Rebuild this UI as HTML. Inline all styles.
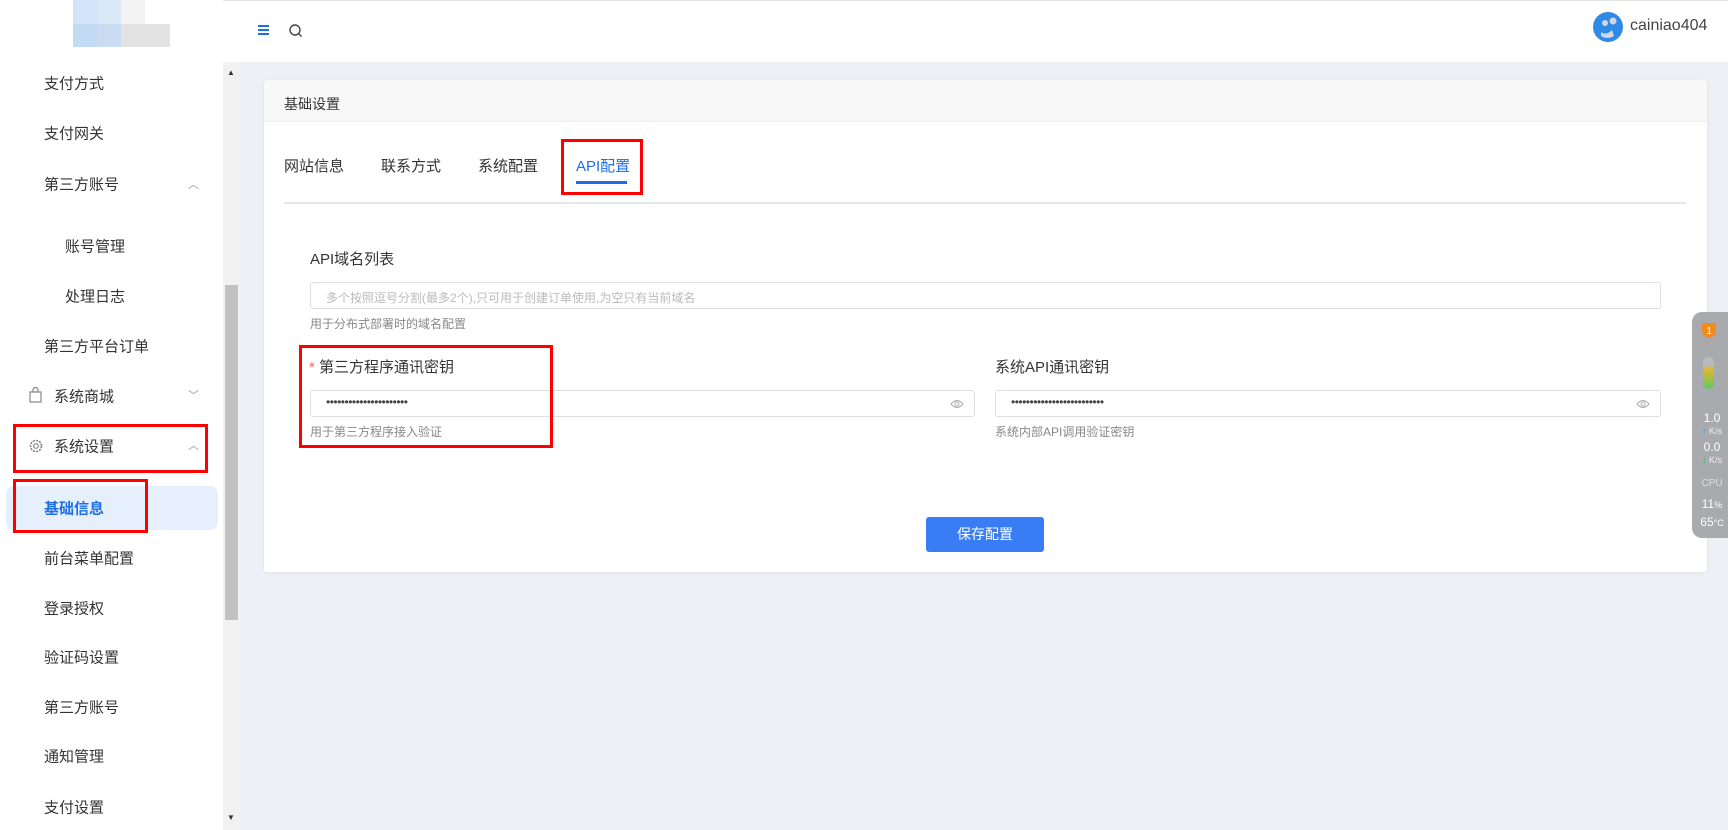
<!DOCTYPE html><html><head><meta charset="utf-8"><style>
*{margin:0;padding:0;box-sizing:border-box}
body{width:1728px;height:830px;overflow:hidden;background:#eef0f6;font-family:"Liberation Sans","Noto Sans CJK SC",sans-serif;position:relative;color:#333}
.a{position:absolute}
.side{left:0;top:0;width:223px;height:830px;background:#fff}
.mi{position:absolute;left:44px;font-size:15px;color:#333;transform:translateY(-50%)}
.sub{left:65px}
.track{left:223px;top:62px;width:17px;height:768px;background:#f1f1f1}
.thumb{left:225px;top:285px;width:13px;height:335px;background:#c1c1c1}
.hdr{left:0;top:0;width:1728px;height:62px;background:#fff;border-top:1px solid #e4e4e4}
.card{left:264px;top:80px;width:1443px;height:492px;background:#fff;border-radius:3px;box-shadow:0 1px 4px rgba(0,0,0,.06)}
.ch{left:264px;top:80px;width:1443px;height:42px;background:#f8f8f9;border-bottom:1px solid #eee;border-radius:3px 3px 0 0}
.t{font-size:15px;color:#333}
.inp{position:absolute;height:27px;border:1px solid #dcdfe6;border-radius:3px;background:#fff}
.help{font-size:12px;color:#888}
.red{position:absolute;border:3px solid #f00}
.dots{position:absolute;left:15px;top:4px;font-size:12px;letter-spacing:-0.5px;color:#444}
</style></head><body>
<div class="a hdr"></div>
<div class="a side"></div>
<div class="a" style="left:73px;top:0;width:24px;height:24px;background:#d3e4f8"></div>
<div class="a" style="left:97px;top:0;width:24px;height:24px;background:#dbe8f6"></div>
<div class="a" style="left:121px;top:0;width:24px;height:24px;background:#f3f3f3"></div>
<div class="a" style="left:73px;top:24px;width:24px;height:23px;background:#c3daf5"></div>
<div class="a" style="left:97px;top:24px;width:24px;height:23px;background:#c9dcf2"></div>
<div class="a" style="left:121px;top:24px;width:49px;height:23px;background:#e3e3e3"></div>
<div class="a" style="left:258px;top:25px;width:11px;height:2px;background:#1e6ee8;box-shadow:0 4px 0 #1e6ee8,0 8px 0 #1e6ee8"></div>
<svg class="a" style="left:289px;top:24px" width="14" height="14"><circle cx="6" cy="6" r="5" fill="none" stroke="#444" stroke-width="1.4"/><path d="M9.5 9.5L12.5 12.5" stroke="#444" stroke-width="1.4"/></svg>
<svg class="a" style="left:1593px;top:12px" width="30" height="30"><circle cx="15" cy="15" r="15" fill="#2f8ae5"/><circle cx="12" cy="11" r="3" fill="#cfd6e6"/><circle cx="20" cy="9" r="3.5" fill="#cfd6e6"/><path d="M8 20q5 4 11-2l2 6q-7 4-13 0z" fill="#cfd6e6"/></svg>
<div class="a" style="left:1630px;top:17px;font-size:16px;color:#444">cainiao404</div>

<div class="mi" style="top:83px">支付方式</div>
<div class="mi" style="top:133px">支付网关</div>
<div class="mi" style="top:184px">第三方账号</div>
<div class="a" style="left:188px;top:176px;font-size:11px;color:#999">︿</div>
<div class="mi sub" style="top:246px">账号管理</div>
<div class="mi sub" style="top:296px">处理日志</div>
<div class="mi" style="top:346px">第三方平台订单</div>
<svg class="a" style="left:28px;top:387px" width="15" height="16"><path d="M2 5h11v10H2z M5 5V3a2.5 2.5 0 0 1 5 0v2" fill="none" stroke="#888" stroke-width="1.2"/></svg>
<div class="mi" style="left:54px;top:396px">系统商城</div>
<div class="a" style="left:188px;top:387px;font-size:11px;color:#999">﹀</div>
<svg class="a" style="left:28px;top:438px" width="16" height="16"><circle cx="8" cy="8" r="5.5" fill="none" stroke="#888" stroke-width="1.6" stroke-dasharray="2.2 1"/><circle cx="8" cy="8" r="2.3" fill="none" stroke="#888" stroke-width="1.2"/></svg>
<div class="mi" style="left:54px;top:446px">系统设置</div>
<div class="a" style="left:188px;top:437px;font-size:11px;color:#999">︿</div>
<div class="a" style="left:6px;top:486px;width:212px;height:44px;background:#e6f0fd;border-radius:8px"></div>
<div class="mi" style="top:508px;color:#1e6ee8;font-weight:bold">基础信息</div>
<div class="mi" style="top:558px">前台菜单配置</div>
<div class="mi" style="top:608px">登录授权</div>
<div class="mi" style="top:657px">验证码设置</div>
<div class="mi" style="top:707px">第三方账号</div>
<div class="mi" style="top:756px">通知管理</div>
<div class="mi" style="top:807px">支付设置</div>
<div class="red" style="left:13px;top:424px;width:195px;height:49px"></div>
<div class="red" style="left:13px;top:479px;width:135px;height:54px"></div>
<div class="a track"></div><div class="a thumb"></div>
<div class="a" style="left:227px;top:68px;font-size:8px;color:#333">▲</div>
<div class="a" style="left:227px;top:813px;font-size:8px;color:#333">▼</div>

<div class="a card"></div><div class="a ch"></div>
<div class="a t" style="left:284px;top:94px;font-size:14px">基础设置</div>
<div class="a t" style="left:284px;top:155px">网站信息</div>
<div class="a t" style="left:381px;top:155px">联系方式</div>
<div class="a t" style="left:478px;top:155px">系统配置</div>
<div class="a t" style="left:576px;top:155px;color:#1e6ee8">API配置</div>
<div class="a" style="left:576px;top:181px;width:51px;height:3px;background:#1e6ee8"></div>
<div class="a" style="left:284px;top:202px;width:1402px;height:2px;background:#e4e7ed"></div>
<div class="red" style="left:561px;top:139px;width:82px;height:56px"></div>

<div class="a t" style="left:310px;top:248px">API域名列表</div>
<div class="inp" style="left:310px;top:282px;width:1351px"><span class="a" style="left:15px;top:6px;font-size:12px;color:#bbb">多个按照逗号分割(最多2个),只可用于创建订单使用,为空只有当前域名</span></div>
<div class="a help" style="left:310px;top:315px">用于分布式部署时的域名配置</div>
<div class="a t" style="left:309px;top:356px"><span style="color:#f56c6c">*</span> 第三方程序通讯密钥</div>
<div class="inp" style="left:310px;top:390px;width:665px"><span class="dots">••••••••••••••••••••••</span><svg class="a" style="right:10px;top:8px" width="14" height="10"><path d="M1 5q6-7 12 0q-6 7-12 0z" fill="none" stroke="#aaa"/><circle cx="7" cy="5" r="2" fill="none" stroke="#aaa"/></svg></div>
<div class="a help" style="left:310px;top:423px">用于第三方程序接入验证</div>
<div class="red" style="left:299px;top:345px;width:254px;height:103px"></div>
<div class="a t" style="left:995px;top:356px">系统API通讯密钥</div>
<div class="inp" style="left:995px;top:390px;width:666px"><span class="dots">•••••••••••••••••••••••••</span><svg class="a" style="right:10px;top:8px" width="14" height="10"><path d="M1 5q6-7 12 0q-6 7-12 0z" fill="none" stroke="#aaa"/><circle cx="7" cy="5" r="2" fill="none" stroke="#aaa"/></svg></div>
<div class="a help" style="left:995px;top:423px">系统内部API调用验证密钥</div>
<div class="a" style="left:926px;top:517px;width:118px;height:35px;background:#3a7cf3;border-radius:3px;color:#fff;font-size:14px;text-align:center;line-height:35px">保存配置</div>

<div class="a" style="left:1692px;top:312px;width:40px;height:226px;background:#a8aaad;border-radius:10px 0 0 10px"></div>
<svg class="a" style="left:1701px;top:321px" width="16" height="18"><path d="M1 2h14v8q0 5-7 7q-7-2-7-7z" fill="#f28a1e"/><text x="8" y="13" font-size="10" fill="#fff" text-anchor="middle" font-family="Liberation Sans">1</text></svg>
<div class="a" style="left:1703px;top:357px;width:11px;height:32px;border-radius:6px;background:linear-gradient(#b9bbbe 0,#b9bbbe 25%,#e0b828 40%,#5cc86a 100%)"></div>
<div class="a" style="left:1697px;top:412px;font-size:12px;color:#fff;line-height:12px;width:30px;text-align:center">1.0<br><span style="font-size:9px;color:#eee"><span style="color:#28a7ff">↑</span> K/s</span></div>
<div class="a" style="left:1697px;top:441px;font-size:12px;color:#fff;line-height:12px;width:30px;text-align:center">0.0<br><span style="font-size:9px;color:#eee"><span style="color:#1fbf55">↓</span> K/s</span></div>
<div class="a" style="left:1697px;top:478px;font-size:10px;color:#ddd;width:30px;text-align:center">CPU</div>
<div class="a" style="left:1697px;top:497px;font-size:12px;color:#fff;width:30px;text-align:center">11<span style="font-size:9px">%</span></div>
<div class="a" style="left:1697px;top:515px;font-size:12px;color:#fff;width:30px;text-align:center">65<span style="font-size:9px">°C</span></div>
</body></html>
